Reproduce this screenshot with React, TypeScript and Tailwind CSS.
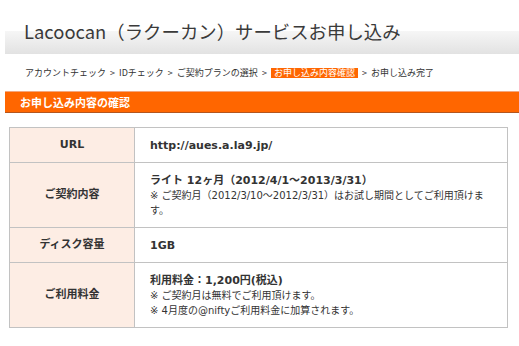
const rows = [
  { label: 'URL', h: 'h-[35px]', main: 'http://aues.a.la9.jp/', notes: [] as string[] },
  {
    label: 'ご契約内容',
    h: 'h-[65px]',
    main: 'ライト 12ヶ月（2012/4/1〜2013/3/31）',
    notes: ['※ ご契約月（2012/3/10〜2012/3/31）はお試し期間としてご利用頂けま', 'す。'],
  },
  { label: 'ディスク容量', h: 'h-[35px]', main: '1GB', notes: [] },
  {
    label: 'ご利用料金',
    h: 'h-[65px]',
    main: '利用料金：1,200円(税込)',
    notes: ['※ ご契約月は無料でご利用頂けます。', '※ 4月度の@niftyご利用料金に加算されます。'],
  },
];

const steps = ['アカウントチェック', 'IDチェック', 'ご契約プランの選択', 'お申し込み内容確認', 'お申し込み完了'];

export default function App() {
  return (
    <div className="w-[519px] h-[346px] bg-white overflow-hidden text-[#333] font-['DejaVu_Sans','Noto_Sans_CJK_JP',sans-serif]">
      {/* title band */}
      <div className="mt-[14px] ml-[5px] h-[40px] pt-[5px] pl-[19px] bg-[linear-gradient(to_bottom,#ffffff_17px,#f6f6f6_17px,#e2e2e2_40px)]">
        <h1 className="text-[18.4px] leading-[24px] font-normal text-[#3a3a3a] font-['Noto_Sans_CJK_JP',sans-serif]">
          Lacoocan（ラクーカン）サービスお申し込み
        </h1>
      </div>

      {/* breadcrumb */}
      <div className="mt-[12px] ml-[25px] h-[13px] flex items-center text-[9px] leading-[13px] whitespace-nowrap font-['Noto_Sans_CJK_JP',sans-serif]">
        {steps.map((s, i) => (
          <span key={s} className="flex items-center">
            {i > 0 && <span className="mx-[4px]">&gt;</span>}
            {i === 3 ? (
              <span className="bg-[#ff6600] text-white px-[3px] h-[10px] leading-[10px] inline-block">{s}</span>
            ) : (
              <span>{s}</span>
            )}
          </span>
        ))}
      </div>

      {/* section bar */}
      <div className="mt-[12px] ml-[5px] h-[22px] border-t border-t-[#f3a77f] border-b border-b-[#b3561f] bg-[#ff6600] flex items-center pl-[15px]">
        <span className="text-white text-[11px] font-bold font-['Noto_Sans_CJK_JP',sans-serif]">お申し込み内容の確認</span>
      </div>

      {/* details table */}
      <div className="mt-[14px] ml-[9px] w-[499px] border-l border-t border-[#c2c2c2]">
        {rows.map((r) => (
          <div key={r.label} className="flex">
            <div
              className={`w-[125px] ${r.h} border-r border-b border-[#c2c2c2] bg-[#fdede4] flex items-center justify-center text-[11px] font-bold`}
            >
              {r.label}
            </div>
            <div
              className={`flex-1 ${r.h} border-r border-b border-[#c2c2c2] pl-[15px] flex flex-col justify-center whitespace-nowrap`}
            >
              <div className="text-[11px] leading-[15px] font-bold">{r.main}</div>
              {r.notes.map((n) => (
                <div key={n} className="text-[10px] leading-[15px]">
                  {n}
                </div>
              ))}
            </div>
          </div>
        ))}
      </div>
    </div>
  );
}
